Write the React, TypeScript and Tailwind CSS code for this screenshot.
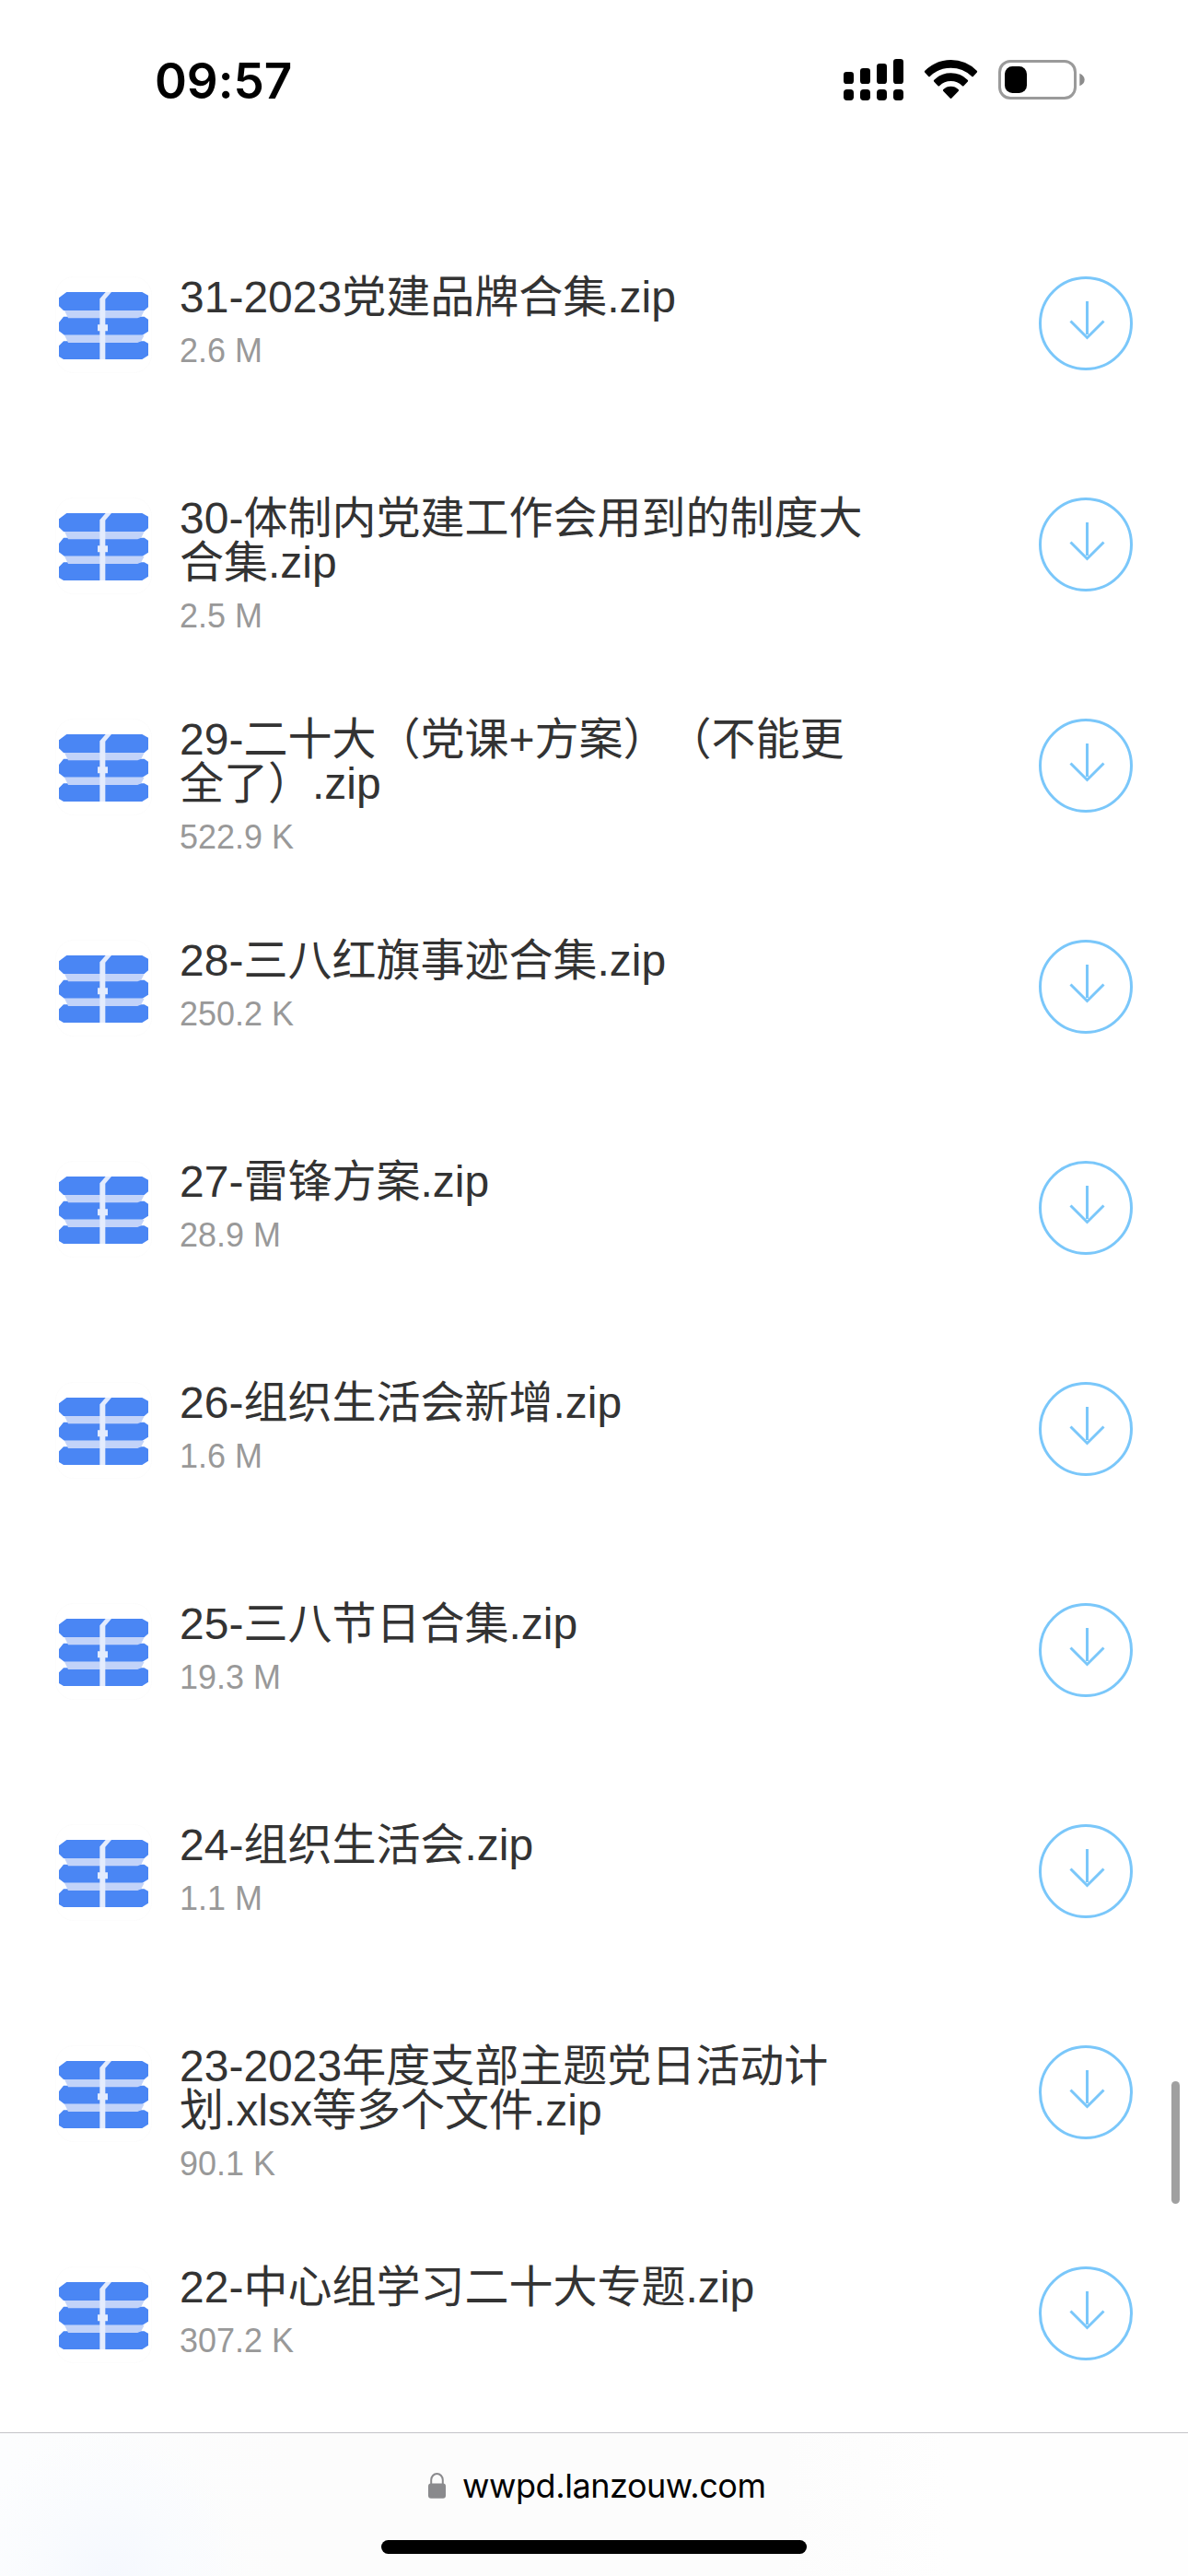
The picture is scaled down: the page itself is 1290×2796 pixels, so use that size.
type FileItem = { lines: string[]; size: string };

const files: FileItem[] = [
  { lines: ['31-2023党建品牌合集.zip'], size: '2.6 M' },
  { lines: ['30-体制内党建工作会用到的制度大', '合集.zip'], size: '2.5 M' },
  { lines: ['29-二十大（党课+方案）（不能更', '全了）.zip'], size: '522.9 K' },
  { lines: ['28-三八红旗事迹合集.zip'], size: '250.2 K' },
  { lines: ['27-雷锋方案.zip'], size: '28.9 M' },
  { lines: ['26-组织生活会新增.zip'], size: '1.6 M' },
  { lines: ['25-三八节日合集.zip'], size: '19.3 M' },
  { lines: ['24-组织生活会.zip'], size: '1.1 M' },
  { lines: ['23-2023年度支部主题党日活动计', '划.xlsx等多个文件.zip'], size: '90.1 K' },
  { lines: ['22-中心组学习二十大专题.zip'], size: '307.2 K' },
];

function StatusIcons() {
  return (
    <svg className="h-[100px] w-[310px]" viewBox="0 0 930 300">
      <rect x="78" y="114" width="33" height="39" rx="10" />
      <rect x="132" y="102" width="33" height="51" rx="10" />
      <rect x="186" y="87" width="33" height="66" rx="10" />
      <rect x="240" y="72" width="33" height="81" rx="10" />
      <rect x="78" y="171" width="33" height="36" rx="11" />
      <rect x="132" y="171" width="33" height="36" rx="11" />
      <rect x="186" y="171" width="33" height="36" rx="11" />
      <rect x="240" y="171" width="33" height="36" rx="11" />
      <path d="M343 110 Q379 75 427.500 75 Q476 75 512 110 Q515 113 512 116 L501 128 Q498 131 495 128 Q467 101 427.500 101 Q388 101 360 128 Q357 131 354 128 L343 116 Q340 113 343 110Z" />
      <path d="M373 140 Q396 118 427.500 118 Q459 118 482 140 Q485 143 482 146 L470 159 Q467 162 464 159 Q449 144 427.500 144 Q406 144 391 159 Q388 162 385 159 L373 146 Q370 143 373 140Z" />
      <path d="M403 171 Q413 161 427.500 161 Q442 161 452 171 Q455 174 452 177 L431 199 Q427.500 203 424 199 L403 177 Q400 174 403 171Z" />
      <rect x="586.500" y="79.500" width="246" height="120" rx="35" fill="none" stroke="#9a9a9a" strokeWidth="9" />
      <rect x="603" y="96" width="72" height="87" rx="25" />
      <path d="M847 119 Q863 126 863 139.500 Q863 153 847 160Z" fill="#8c8c8c" />
    </svg>
  );
}

function ZipIcon() {
  return (
    <svg className="h-[105px] w-[105px] shrink-0" viewBox="0 0 315 315">
      <rect x="1" y="1" width="313" height="313" rx="60" fill="#fff" stroke="#fafafa" strokeWidth="2" />
      <path
        d="M37 51 H283 L303 62 V100 L290 111 H27 L12 97 V70Z M27 131 H290 L303 140 V179 L284 191 H30 L12 178 V150Z M27 211 H290 L303 218 V257 L283 270 H27 L12 261 V226Z"
        fill="#4a86f4"
      />
      <path d="M30 111 H290 L280 131 L268 136 H42Z M30 191 H290 L280 211 L268 216 H42Z" fill="#c2d3f9" />
      <path d="M164 51 H183 L163 74 V157 H171 V178 H163 V270 H145 V178 H138 V157 H145 V73Z" fill="#e4ecfd" />
    </svg>
  );
}

function DownloadIcon() {
  return (
    <svg className="h-[102px] w-[102px] shrink-0" viewBox="0 0 102 102" fill="none" stroke="#7ac7fa" strokeWidth="3">
      <circle cx="51" cy="51" r="49.500" />
      <path d="M52.500 27V63M34.500 48.500L52.500 66.500L70.500 48.500" />
    </svg>
  );
}

function FileRow({ file }: { file: FileItem }) {
  return (
    <li className="flex h-60 items-start pr-[60px] pl-[60px]">
      <ZipIcon />
      <div className="-mt-px ml-[30px] flex-1">
        <div className="text-[48px] leading-[48px] whitespace-nowrap text-[#333] [text-spacing-trim:space-all]">
          {file.lines.map((line) => (
            <div key={line}>{line}</div>
          ))}
        </div>
        <div className="mt-4 text-[36px] leading-[36px] text-[#999]">{file.size}</div>
      </div>
      <DownloadIcon />
    </li>
  );
}

export default function App() {
  return (
    <div
      lang="zh-CN"
      className="relative flex h-[2796px] w-[1290px] flex-col bg-white font-['Liberation_Sans','Noto_Sans_CJK_SC',sans-serif]"
    >
      <header className="flex h-[300px] shrink-0 items-start justify-between pt-10 pr-[90px] pl-[168px]">
        <time className="pt-[16px] font-[Inter,sans-serif] text-[53px] leading-[64px] font-semibold tracking-[-0.1px] text-black">
          09:57
        </time>
        <StatusIcons />
      </header>
      <ul className="h-[2340px] shrink-0">
        {files.map((file) => (
          <FileRow key={file.lines[0]} file={file} />
        ))}
      </ul>
      <footer className="flex h-[156px] shrink-0 flex-col items-center border-t border-[#c4c4c8] bg-[#fcfcfd] bg-[radial-gradient(ellipse_150px_160px_at_118px_156px,#f5f8fe,#f9fbfe_50%,transparent),linear-gradient(90deg,#fcfdfe_0%,#fcfcfc_25%,#fcfcfc_66%,#fefefe_80%)]">
        <div className="mt-[33px] flex h-[48px] w-full items-center pl-[465px]">
          <svg className="h-[28px] w-[19px] shrink-0" viewBox="0 0 19 28">
            <path d="M3.200 13V7.800a6.300 6.800 0 0 1 12.600 0V13" fill="none" stroke="#8a8a8d" strokeWidth="2" />
            <rect y="11.500" width="19" height="16.300" rx="3" fill="#8a8a8d" />
          </svg>
          <span className="ml-[18px] font-[Inter,sans-serif] text-[36px] leading-[48px] tracking-[-0.45px] whitespace-nowrap text-black">
            wwpd.lanzouw.com
          </span>
        </div>
        <div className="mt-[35px] h-[15px] w-[462px] rounded-full bg-black" />
      </footer>
      <div className="absolute top-[2259px] right-[9px] h-[133px] w-[9px] rounded-full bg-[#a0a0a0]" />
    </div>
  );
}
